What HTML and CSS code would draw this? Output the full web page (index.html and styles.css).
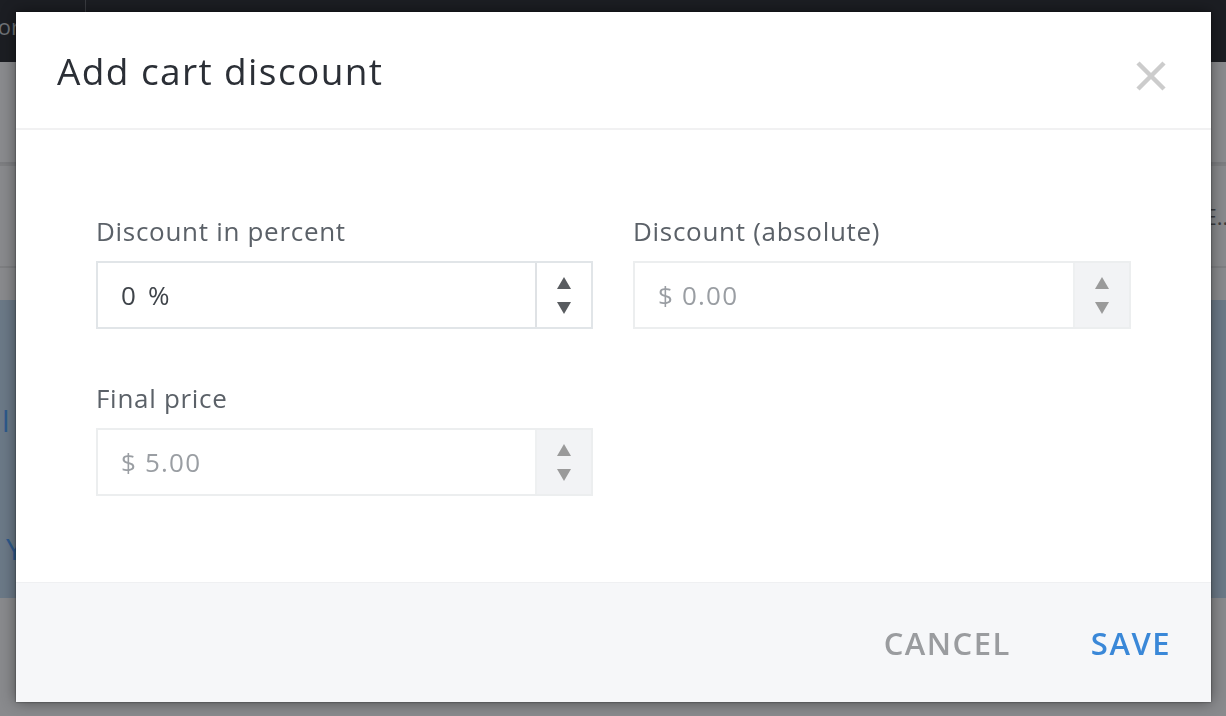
FILE: index.html
```html
<!DOCTYPE html>
<html>
<head>
<meta charset="utf-8">
<link rel="stylesheet" href="styles.css">
</head>
<body>
<div class="app">
  <header class="topbar">
    <div class="brand">Priority</div>
    <div class="topbar-rest"></div>
  </header>
  <div class="subbar"></div>
  <div class="content">
    <div class="row-line"></div>
    <div class="tools"><span class="tool-text">E...</span></div>
    <div class="row-line"></div>
    <div class="panel">
      <span class="panel-glyph g1">l</span>
      <span class="panel-glyph g2">Y</span>
    </div>
  </div>
</div>

<div class="overlay">
  <div class="modal">
    <div class="modal-header">
      <h1 class="modal-title">Add cart discount</h1>
      <button class="close" aria-label="Close">
        <svg viewBox="0 0 32 32" width="32" height="32"><path d="M3 3 L29 29 M29 3 L3 29" stroke="#cccccc" stroke-width="4.5" stroke-linecap="butt"/></svg>
      </button>
    </div>
    <div class="modal-body">
      <div class="field">
        <label class="label">Discount in percent</label>
        <div class="input">
          <span class="value pct">0 %</span>
          <span class="spinner"><i class="up"></i><i class="down"></i></span>
        </div>
      </div>
      <div class="field">
        <label class="label">Discount (absolute)</label>
        <div class="input disabled">
          <span class="value">$ 0.00</span>
          <span class="spinner"><i class="up"></i><i class="down"></i></span>
        </div>
      </div>
      <div class="field">
        <label class="label">Final price</label>
        <div class="input disabled">
          <span class="value">$ 5.00</span>
          <span class="spinner"><i class="up"></i><i class="down"></i></span>
        </div>
      </div>
    </div>
    <div class="modal-footer">
      <button class="btn cancel">CANCEL</button>
      <button class="btn save">SAVE</button>
    </div>
  </div>
</div>
</body>
</html>
```
FILE: styles.css
```css
html, body {
  margin: 0;
  padding: 0;
  height: 100%;
  overflow: hidden;
}
body {
  font-family: "Open Sans", "Lato", sans-serif;
  background: #898a8d;
}
.app {
  height: 100%;
  display: flex;
  flex-direction: column;
}
.topbar {
  height: 62px;
  background: #1c1e23;
  display: flex;
}
.brand {
  width: 85px;
  border-right: 1px solid #3a3c41;
  color: #6f7277;
  font-size: 22px;
  line-height: 52px;
  text-indent: -30px;
  overflow: hidden;
  white-space: nowrap;
}
.topbar-rest { flex: 1; }
.subbar {
  height: 100px;
  background: #8a8b8e;
  border-bottom: 2px solid #7c7d80;
}
.content {
  flex: 1;
  display: flex;
  flex-direction: column;
}
.row-line {
  height: 2px;
  background: #7e7f82;
}
.tools {
  height: 100px;
  display: flex;
  justify-content: flex-end;
  align-items: center;
}
.tool-text {
  color: #3c3d40;
  font-size: 22px;
  margin-right: -8px;
}
.panel {
  margin-top: 32px;
  height: 298px;
  background: #6b7987;
  position: relative;
}
.panel-glyph {
  position: absolute;
  color: #2e5a8c;
  font-size: 30px;
}
.g1 { left: 2px; top: 100px; }
.g2 { left: 6px; top: 228px; }

.overlay {
  position: fixed;
  inset: 0;
  padding: 12px 15px 14px 16px;
  display: flex;
}
.modal {
  flex: 1;
  background: #ffffff;
  display: flex;
  flex-direction: column;
  box-shadow: 0 0 14px rgba(0,0,0,0.45), 0 0 2px rgba(0,0,0,0.5);
}
.modal-header {
  height: 118px;
  border-bottom: 2px solid #f1f1f2;
  display: flex;
  align-items: center;
  justify-content: space-between;
  padding: 0 44px 0 41px;
  box-sizing: border-box;
}
.modal-title {
  margin: 0;
  font-weight: 400;
  font-size: 37px;
  color: #2b2f36;
  letter-spacing: 1.4px;
  padding-top: 1px;
}
.close {
  background: none;
  border: 0;
  padding: 0;
  width: 32px;
  height: 32px;
  margin-top: 12px;
  cursor: pointer;
}
.close svg { display: block; }
.modal-body {
  flex: 1;
  display: grid;
  grid-template-columns: 497px 498px;
  column-gap: 40px;
  row-gap: 53px;
  align-content: start;
  padding: 85px 79px 0 80px;
}
.field {
  display: flex;
  flex-direction: column;
}
.label {
  font-size: 26px;
  color: #5b6168;
  line-height: 32px;
  margin-bottom: 14px;
  letter-spacing: 0.7px;
}
.input {
  height: 68px;
  box-sizing: border-box;
  border: 2px solid #e1e5e8;
  display: flex;
  align-items: stretch;
  background: #ffffff;
}
.value {
  flex: 1;
  display: flex;
  align-items: center;
  padding-left: 23px;
  font-size: 26px;
  color: #3f444a;
  letter-spacing: 1.2px;
  white-space: pre;
}
.value.pct { word-spacing: 3px; }
.spinner {
  width: 54px;
  border-left: 2px solid #dfe2e5;
  display: flex;
  flex-direction: column;
  align-items: center;
  justify-content: center;
  gap: 13px;
}
.spinner i {
  display: block;
  width: 0;
  height: 0;
  border-left: 7px solid transparent;
  border-right: 7px solid transparent;
}
.spinner .up { border-bottom: 12px solid #595c60; }
.spinner .down { border-top: 12px solid #595c60; }
.input.disabled { border-color: #eceeef; }
.input.disabled .value { color: #9a9ea3; }
.input.disabled .spinner {
  background: #f2f3f5;
  border-left-color: #eef0f1;
}
.input.disabled .spinner .up { border-bottom-color: #9a9a9a; }
.input.disabled .spinner .down { border-top-color: #9a9a9a; }

.modal-footer {
  height: 120px;
  background: #f6f7f9;
  border-top: 1px solid #eff0f2;
  display: flex;
  align-items: center;
  justify-content: flex-end;
  gap: 80px;
  padding-right: 40px;
  box-sizing: border-box;
}
.btn {
  background: none;
  border: 0;
  padding: 0;
  font-family: "Open Sans", "Lato", sans-serif;
  font-size: 31px;
  font-weight: 600;
  letter-spacing: 1.5px;
  cursor: pointer;
}
.cancel { color: #9a9c9f; }
.save { color: #3a88d8; }
```
